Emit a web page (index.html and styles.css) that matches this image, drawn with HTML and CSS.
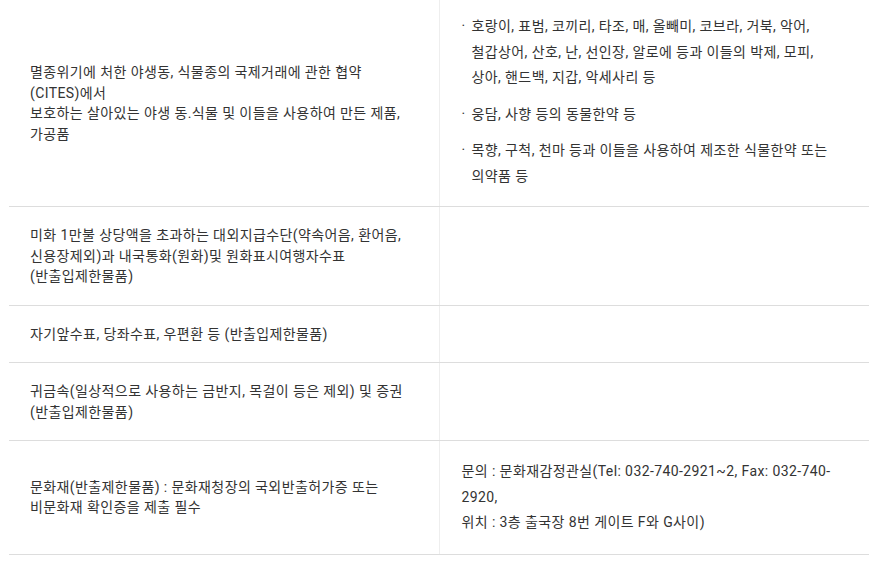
FILE: index.html
```html
<!DOCTYPE html>
<html lang="ko">
<head>
<meta charset="utf-8">
<link rel="stylesheet" href="styles.css">
</head>
<body>
<div class="wrap">
<table class="tbl">
  <colgroup><col class="c1"><col class="c2"></colgroup>
  <tbody>
    <tr class="r1">
      <td class="lc">멸종위기에 처한 야생동, 식물종의 국제거래에 관한 협약<br>(CITES)에서<br>보호하는 살아있는 야생 동.식물 및 이들을 사용하여 만든 제품,<br>가공품</td>
      <td class="rc">
        <ul class="dots">
          <li>호랑이, 표범, 코끼리, 타조, 매, 올빼미, 코브라, 거북, 악어,<br>철갑상어, 산호, 난, 선인장, 알로에 등과 이들의 박제, 모피,<br>상아, 핸드백, 지갑, 악세사리 등</li>
          <li>웅담, 사향 등의 동물한약 등</li>
          <li>목향, 구척, 천마 등과 이들을 사용하여 제조한 식물한약 또는<br>의약품 등</li>
        </ul>
      </td>
    </tr>
    <tr>
      <td class="lc">미화 1만불 상당액을 초과하는 대외지급수단(약속어음, 환어음,<br>신용장제외)과 내국통화(원화)및 원화표시여행자수표<br>(반출입제한물품)</td>
      <td class="rc"></td>
    </tr>
    <tr>
      <td class="lc">자기앞수표, 당좌수표, 우편환 등 (반출입제한물품)</td>
      <td class="rc"></td>
    </tr>
    <tr>
      <td class="lc">귀금속(일상적으로 사용하는 금반지, 목걸이 등은 제외) 및 증권<br>(반출입제한물품)</td>
      <td class="rc"></td>
    </tr>
    <tr>
      <td class="lc">문화재(반출제한물품) : 문화재청장의 국외반출허가증 또는<br>비문화재 확인증을 제출 필수</td>
      <td class="rc info">문의 : 문화재감정관실(Tel: 032-740-2921~2, Fax: 032-740-<br>2920,<br>위치 : 3층 출국장 8번 게이트 F와 G사이)</td>
    </tr>
  </tbody>
</table>
</div>
</body>
</html>
```

FILE: styles.css
```css
html, body {
  margin: 0;
  padding: 0;
  background: #fff;
}
.wrap {
  padding-left: 9px;
}
.tbl {
  width: 860px;
  border-collapse: collapse;
  table-layout: fixed;
  font-family: Roboto, "Noto Sans CJK KR", sans-serif;
  font-size: 14px;
  letter-spacing: 0.4px;
  color: #333;
  white-space: nowrap;
}
.c1 { width: 430px; }
.c2 { width: 430px; }
.tbl td {
  border-bottom: 1px solid #ddd;
  vertical-align: middle;
}
.tbl td.rc {
  border-left: 1px solid #eee;
}
.lc {
  padding: 18px 20px 18px 21px;
  line-height: 20.5px;
}
.rc {
  padding: 14px 10px 17px 22px;
  line-height: 25.5px;
}
.rc.info {
  padding-top: 18px;
  padding-bottom: 18px;
}
.dots {
  list-style: none;
  margin: 0;
  padding: 0;
}
.dots li {
  position: relative;
  padding-left: 10px;
}
.dots li + li {
  margin-top: 11px;
}
.dots li::before {
  content: "·";
  position: absolute;
  left: 0;
  top: 0;
}
```
